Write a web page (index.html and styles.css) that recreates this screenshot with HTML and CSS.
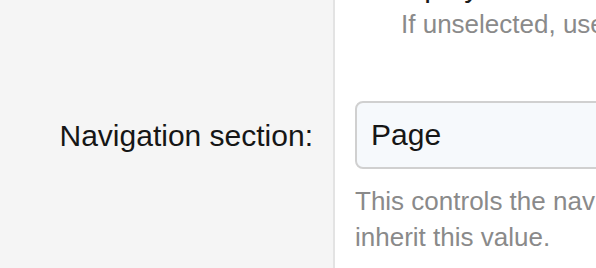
FILE: index.html
```html
<!DOCTYPE html>
<html lang="en">
<head>
<meta charset="utf-8">
<title>Navigation section</title>
<link rel="stylesheet" href="styles.css">
</head>
<body>
<div class="form">
  <div class="row row-check">
    <div class="label-cell"></div>
    <div class="field-cell">
      <label class="check-line"><span class="checkbox"></span><span class="check-text">Display in menus</span></label>
      <p class="help help-indented">If unselected, use the parent page's setting.</p>
    </div>
  </div>
  <div class="row row-select">
    <div class="label-cell"><label class="label">Navigation section:</label></div>
    <div class="field-cell">
      <div class="select">Page</div>
      <p class="help help-below">This controls the navigation section highlighted for this page. Child pages<br>inherit this value.</p>
    </div>
  </div>
</div>
</body>
</html>
```

FILE: styles.css
```css
html, body {
  margin: 0;
  padding: 0;
  background: #ffffff;
}
body {
  width: 596px;
  height: 268px;
  overflow: hidden;
  font-family: "Liberation Sans", Arial, Helvetica, sans-serif;
  color: #1a1a1a;
}
.form {
  display: flex;
  flex-direction: column;
  margin-top: -31px;
  min-height: 320px;
}
.row {
  display: flex;
  align-items: stretch;
}
.row-select {
  flex: 1;
}
.label-cell {
  width: 333px;
  flex: 0 0 333px;
  background: #f5f5f5;
  border-right: 2px solid #e3e3e3;
  display: flex;
  justify-content: flex-end;
  box-sizing: content-box;
}
.field-cell {
  padding-left: 20px;
  flex: 1;
  min-width: 0;
}
.check-line {
  display: flex;
  align-items: center;
  gap: 22px;
  font-size: 30px;
  line-height: 36px;
  white-space: nowrap;
}
.checkbox {
  width: 24px;
  height: 24px;
  border: 2px solid #c8c8c8;
  border-radius: 6px;
  box-sizing: border-box;
  background: #fff;
}
.help {
  margin: 0;
  font-size: 26px;
  line-height: 36px;
  color: #8a8a8a;
  white-space: nowrap;
}
.help-indented {
  margin-top: 1px;
  padding-left: 46px;
}
.row-select .label-cell {
  padding-top: 60px;
  align-items: flex-start;
}
.row-select .field-cell {
  padding-top: 59px;
}
.label {
  display: flex;
  align-items: center;
  height: 68px;
  margin-right: 20px;
  font-size: 30px;
  line-height: 36px;
  color: #161616;
  white-space: nowrap;
}
.select {
  height: 68px;
  box-sizing: border-box;
  width: 420px;
  border: 2px solid #d0d0d0;
  border-radius: 8px;
  background: #f6f9fc;
  padding: 0 14px;
  display: flex;
  align-items: center;
  font-size: 30px;
  line-height: 36px;
  color: #161616;
}
.help-below {
  margin-top: 14px;
}
```
